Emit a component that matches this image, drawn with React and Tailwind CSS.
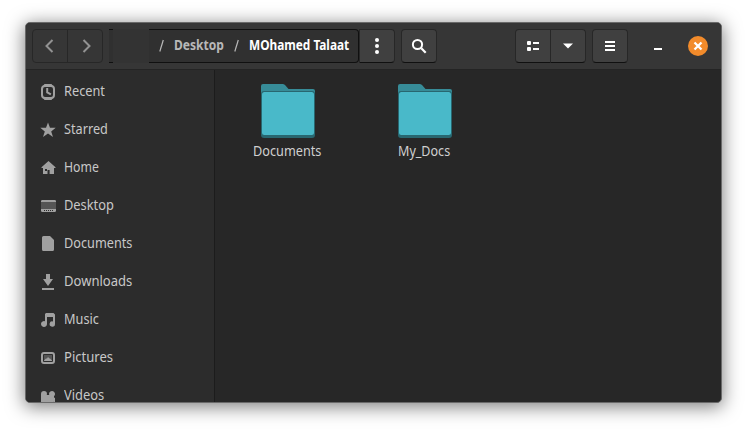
import React from 'react';

const places = [
  { label: 'Recent', icon: 'recent', width: 'w-[41px]' },
  { label: 'Starred', icon: 'star', width: 'w-[43.5px]' },
  { label: 'Home', icon: 'home', width: 'w-[35px]' },
  { label: 'Desktop', icon: 'desktop', width: 'w-[49.5px]' },
  { label: 'Documents', icon: 'document', width: 'w-[68px]' },
  { label: 'Downloads', icon: 'download', width: 'w-[68px]' },
  { label: 'Music', icon: 'music', width: 'w-[34.5px]' },
  { label: 'Pictures', icon: 'picture', width: 'w-[49.5px]' },
  { label: 'Videos', icon: 'video', width: 'w-[40.5px]' },
];

const glyphs = {
  recent: (
    <>
      <path d="M4.5 0h7L13 2H3zM3 14h10l-1.500 2h-7z" />
      <rect x="2" y="2" width="12" height="12" rx="3" fill="none" stroke="currentColor" strokeWidth="2" />
      <path d="M7.2 4v4.300l3.700 2" fill="none" stroke="currentColor" strokeWidth="2" />
    </>
  ),
  star: <path d="m8 .5 2 5.300h5.700l-4.500 3.600L13 15l-5-3.400L3 15l1.800-5.600L.3 5.800H6z" />,
  home: <path fillRule="evenodd" d="m8.500 1 7 6.300v.7H14v6H9.600v-4H7.500v4H3V8H1.500v-.7zM5 9v2h2V9z" />,
  desktop: (
    <>
      <rect x="1" y="2" width="15" height="12" rx="1" fill="#555" />
      <path d="M2 2h13l1 1v1H1V3zM1 11h15v2l-1 1H2l-1-1z" />
      <path d="M4 12h1v1H4zm2 0h1v1H6zm2 0h1v1H8zm2 0h1v1h-1zm2 0h1v1h-1z" fill="#2c2c2c" />
    </>
  ),
  document: <path d="M4 0h6l4 4v9.500a1.500 1.500 0 0 1-1.500 1.500h-9A1.500 1.500 0 0 1 2 13.500v-12A1.500 1.500 0 0 1 3.500 0z" />,
  download: <path d="M6 0h4v5h3l-5 7-5-7h3zM2 14h12v2H2z" />,
  music: <path d="M6 1h7.500L15 2.500V12a2.700 2.700 0 1 1-2-2.600V5H7v7a3 3 0 1 1-2-2.800V2z" />,
  picture: (
    <>
      <rect x="2" y="3" width="12" height="10" rx="2" fill="none" stroke="currentColor" strokeWidth="2" />
      <rect x="4" y="5" width="8" height="6" fill="#555" />
      <path d="M4 11v-.5l2-2h1l1-1.500 1.500 1.500h.5l2 2v.5z" />
    </>
  ),
  video: <path d="M4 3a3 3 0 0 1 3 3l-.3 1h2.600L9 6a3 3 0 1 1 5 2.200V10l1-.5V15h-1l-1-1.500v2H2L1 14V6a3 3 0 0 1 3-3z" />,
};

/* Fits a single line of text to its column, like the condensed UI face. */
function Fit({ children, width, weight = 'font-normal' }) {
  const ref = React.useRef(null);
  const [scale, setScale] = React.useState(1);
  React.useLayoutEffect(() => {
    setScale(ref.current.parentElement.getBoundingClientRect().width / ref.current.offsetWidth);
  }, []);
  return (
    <span className={`block shrink-0 whitespace-nowrap ${width}`}>
      <span ref={ref} className={`inline-block origin-left ${weight}`} style={{ transform: `scaleX(${scale})` }}>
        {children}
      </span>
    </span>
  );
}

function Button({ children, className = '' }) {
  return (
    <button className={`flex h-[34px] items-center justify-center border border-[#272727] border-b-[#101010] bg-[#404040] text-white ${className}`}>
      {children}
    </button>
  );
}

function Folder({ label, width }) {
  return (
    <div className="flex w-[137px] flex-col items-center">
      <svg width="54" height="54" viewBox="0 0 54 54">
        <path d="M2 0h19.500q1.500 0 2.500 1l3.500 4H52a2 2 0 0 1 2 2v20H0V2a2 2 0 0 1 2-2z" fill="#378c98" />
        <path d="M0 10q0-3 3-3h48q3 0 3 3v41q0 3-3 3H3q-3 0-3-3z" fill="#286770" />
        <rect x="1" y="8" width="52" height="43" rx="2.500" fill="#49b9c9" />
      </svg>
      <div className="mt-[3px] pr-0.5 text-[14px] leading-5 text-[#d0d0d0]">
        <Fit width={width}>{label}</Fit>
      </div>
    </div>
  );
}

export default function App() {
  return (
    <div className="h-[431px] w-[747px] overflow-hidden bg-white pt-[22px] pl-[25px] font-['Noto_Sans','Open_Sans',sans-serif]">
      <div className="flex h-[381px] w-[697px] flex-col overflow-hidden rounded-[5px] border border-[#696969] bg-[#272727] shadow-[0_3px_18px_1px_rgba(0,0,0,0.5)]">
        <header className="flex h-[47px] shrink-0 items-center border-b border-[#242424] bg-[#363636] pl-1.5">
          <nav className="flex h-[34px] w-[71px] rounded-[4px] border border-[#272727] text-[#929292]">
            <span className="flex w-[35px] items-center justify-center border-r border-[#272727] pr-[3px]">
              <svg width="16" height="16" fill="none" stroke="currentColor" strokeWidth="2"><path d="m11.500 2-6 6 6 6" /></svg>
            </span>
            <span className="flex flex-1 items-center justify-center pl-0.5">
              <svg width="16" height="16" fill="none" stroke="currentColor" strokeWidth="2"><path d="m5.500 2 6 6-6 6" /></svg>
            </span>
          </nav>
          <div className="ml-1.5 flex h-[34px] w-[250px] items-center rounded-r-[4px] border-y border-r border-[#101010] bg-[#303030] text-[14px] leading-5 text-[#b8b8b8]">
            <span className="h-[34px] w-1 shrink-0" />
            <span className="h-[34px] w-9 shrink-0 bg-[#333333]" />
            <svg className="ml-[10px] shrink-0" width="5" height="14" fill="none" stroke="currentColor" strokeWidth="1.200"><path d="M4.300 1 .8 12.500" /></svg>
            <span className="ml-[10px] pb-0.5"><Fit width="w-[50px]" weight="font-bold">Desktop</Fit></span>
            <svg className="ml-[10px] shrink-0" width="5" height="14" fill="none" stroke="currentColor" strokeWidth="1.200"><path d="M4.300 1 .8 12.500" /></svg>
            <span className="ml-[10px] pb-0.5 text-white"><Fit width="w-[100.5px]" weight="font-bold">MOhamed Talaat</Fit></span>
          </div>
          <Button className="w-9 rounded-r-[4px]">
            <svg width="16" height="16" fill="currentColor"><circle cx="8" cy="2" r="2" /><circle cx="8" cy="8" r="2" /><circle cx="8" cy="14" r="2" /></svg>
          </Button>
          <Button className="ml-1.5 w-9 rounded-[4px]">
            <svg width="16" height="16" fill="none" stroke="currentColor" strokeWidth="2"><circle cx="6.500" cy="6.500" r="4.600" /><path d="m10.300 10.300 4.400 4.400" strokeWidth="2.200" /></svg>
          </Button>
          <div className="ml-[78px] flex">
            <Button className="w-9 rounded-l-[4px]">
              <svg width="14" height="12" fill="currentColor"><rect x="1" y="1" width="4" height="4" rx="1" /><rect x="1" y="7" width="4" height="4" rx="1" /><path d="M7 2h6v2H7zM7 8h6v2H7z" /></svg>
            </Button>
            <Button className="-ml-px w-9 rounded-r-[4px]">
              <svg width="10" height="6" fill="currentColor"><path d="M0 .5h10l-5 5z" /></svg>
            </Button>
          </div>
          <Button className="ml-1.5 w-9 rounded-[4px]">
            <svg width="10" height="10" fill="currentColor"><path d="M0 0h10v2H0zM0 4h10v2H0zM0 8h10v2H0z" /></svg>
          </Button>
          <span className="mt-1.5 ml-[26px] h-0.5 w-2 bg-white" />
          <span className="ml-[26px] flex size-5 items-center justify-center rounded-full bg-[#f28b2b]">
            <svg width="10" height="10" fill="none" stroke="#fff" strokeWidth="2.300"><path d="m1.500 1.500 7 7m0-7-7 7" /></svg>
          </span>
        </header>
        <div className="flex min-h-0 flex-1">
          <aside className="w-[189px] shrink-0 overflow-hidden border-r border-[#1c1c1c] bg-[#2c2c2c] pt-[3px] text-[14px] leading-5 text-[#c8c8c8]">
            {places.map(({ label, icon, width }) => (
              <div key={label} className="flex h-[38px] items-center gap-2 pl-3.5">
                <svg className="shrink-0 text-[#a0a0a0]" width="16" height="16" fill="currentColor">{glyphs[icon]}</svg>
                <span className="pb-0.5"><Fit width={width}>{label}</Fit></span>
              </div>
            ))}
          </aside>
          <main className="flex pt-3.5 pl-[4px]">
            <Folder label="Documents" width="w-[68px]" />
            <Folder label="My_Docs" width="w-[52px]" />
          </main>
        </div>
      </div>
    </div>
  );
}
